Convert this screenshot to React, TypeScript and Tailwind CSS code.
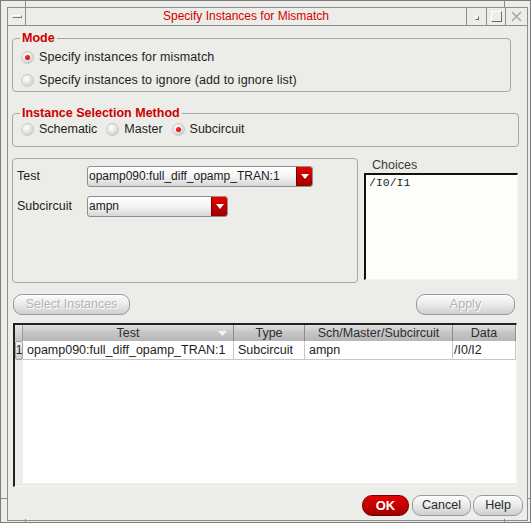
import React from 'react';

// helper bits
const Radio = ({ on }: { on?: boolean }) => (
  <span className="flex h-[11px] w-[11px] shrink-0 items-center justify-center rounded-full bg-[radial-gradient(circle_at_40%_35%,#ffffff,#e6e6e6_45%,#b4b4b4)] shadow-[0_0_0_1px_#c8c8c8]">
    {on && <span className="h-[5px] w-[5px] rounded-full bg-[radial-gradient(circle_at_40%_35%,#ff3030,#c00000)]" />}
  </span>
);

const Dropdown = ({ value, width }: { value: string; width: string }) => (
  <div className={`flex h-[21px] ${width} overflow-hidden rounded-[3px] border border-[#8e8e8e] bg-[linear-gradient(#ffffff,#f4f4f4_50%,#d6d6d6)]`}>
    <span className="flex-1 truncate pl-[1px] text-[12px] leading-[18px] text-[#1a1a1a]">{value}</span>
    <span className="flex w-[16px] items-center justify-center border-l border-[#7a0000] bg-[linear-gradient(#e80000,#c00000_50%,#9a0000)]">
      <svg width="8" height="5" viewBox="0 0 8 5">
        <path d="M0 0 L8 0 L4 5 Z" fill="#ffffff" />
      </svg>
    </span>
  </div>
);

const PillButton = ({ label, width, disabled }: { label: string; width: string; disabled?: boolean }) => (
  <div
    className={`flex h-[21px] ${width} items-center justify-center rounded-[9px] border border-[#9a9a9a] bg-[linear-gradient(#fbfbfb,#ececec_45%,#cfcfcf)] shadow-[inset_0_1px_0_#ffffff] ${
      disabled ? 'text-[#b4b4b4] [text-shadow:1px_1px_0_#ffffff]' : 'text-[#2a2a2a]'
    }`}
  >
    {label}
  </div>
);

const cols = [
  { title: 'Test', w: 'w-[211px]', arrow: true },
  { title: 'Type', w: 'w-[71px]' },
  { title: 'Sch/Master/Subcircuit', w: 'w-[148px]' },
  { title: 'Data', w: 'w-[63px]' },
];

const row = ['opamp090:full_diff_opamp_TRAN:1', 'Subcircuit', 'ampn', '/I0/I2'];

export default function App() {
  return (
    <div className="relative h-[523px] w-[531px] overflow-hidden border border-[#7c7c7c] bg-[#ecece9] font-['Liberation_Sans',Arial,sans-serif] text-[12.5px] text-[#1e1e1e]">
      {/* frame handle ticks */}
      <span className="absolute left-[24px] top-0 h-[7px] w-px bg-[#8e8e8e]" />
      <span className="absolute left-[503px] top-0 h-[7px] w-px bg-[#8e8e8e]" />
      <span className="absolute bottom-0 left-[24px] h-[3px] w-px bg-[#8e8e8e]" />
      <span className="absolute bottom-0 left-[503px] h-[3px] w-px bg-[#8e8e8e]" />
      <span className="absolute left-0 top-[497px] h-px w-[6px] bg-[#8e8e8e]" />
      <span className="absolute right-0 top-[497px] h-px w-[2px] bg-[#8e8e8e]" />

      <div className="mb-[1px] ml-[6px] mr-[2px] mt-[6px] flex h-[514px] flex-col border border-[#8e8e8e]">
        {/* title bar */}
        <div className="flex h-[18px] shrink-0 border-b border-[#8e8e8e]">
          <div className="flex w-[18px] items-center justify-center border-r border-[#8e8e8e]">
            <span className="h-[3px] w-[10px] border border-b-[#7a7a7a] border-l-white border-r-[#7a7a7a] border-t-white" />
          </div>
          <div className="flex-1 text-center text-[12px] leading-[17px] text-[#d40000]">Specify Instances for Mismatch</div>
          <div className="flex w-[20px] items-center justify-center border-l border-[#8e8e8e]">
            <span className="mt-[3px] h-[4px] w-[4px] border border-b-[#6a6a6a] border-l-white border-r-[#6a6a6a] border-t-white" />
          </div>
          <div className="flex w-[19px] items-center justify-center border-l border-[#8e8e8e]">
            <span className="h-[11px] w-[11px] border border-b-[#6a6a6a] border-l-white border-r-[#6a6a6a] border-t-white" />
          </div>
          <div className="flex w-[22px] items-center justify-center border-l border-[#8e8e8e]">
            <svg width="11" height="11" viewBox="0 0 11 11">
              <path d="M1 1 L10 10 M10 1 L1 10" stroke="#a8a8a8" strokeWidth="1.6" />
            </svg>
          </div>
        </div>

        {/* Mode */}
        <fieldset className="ml-[4px] mr-[16px] mt-[5px] h-[61px] rounded-[4px] border border-[#a6a6a6] pb-[2px] pl-[9px]">
          <legend className="ml-[-2px] px-[2px] text-[12.5px] font-bold leading-[15px] text-[#cc0000]">Mode</legend>
          <div className="mt-[1px] flex h-[20px] items-center gap-[6px] tracking-[0.1px]">
            <Radio on />
            <span>Specify instances for mismatch</span>
          </div>
          <div className="mt-[3px] flex h-[20px] items-center gap-[6px] tracking-[0.1px]">
            <Radio />
            <span>Specify instances to ignore (add to ignore list)</span>
          </div>
        </fieldset>

        {/* Instance Selection Method */}
        <fieldset className="ml-[4px] mr-[8px] mt-[14px] h-[41px] rounded-[4px] border border-[#a6a6a6] pl-[9px]">
          <legend className="ml-[-2px] px-[2px] text-[12.5px] font-bold leading-[15px] text-[#cc0000]">Instance Selection Method</legend>
          <div className="flex h-[16px] items-center gap-[10px]">
            <div className="flex items-center gap-[6px]">
              <Radio />
              <span>Schematic</span>
            </div>
            <div className="flex items-center gap-[6px]">
              <Radio />
              <span>Master</span>
            </div>
            <div className="flex items-center gap-[6px]">
              <Radio on />
              <span>Subcircuit</span>
            </div>
          </div>
        </fieldset>

        {/* test / subcircuit + choices */}
        <div className="ml-[4px] mt-[11px] flex h-[125px] gap-[6px]">
          <div className="w-[346px] rounded-[4px] border border-[#a6a6a6] pl-[4px] pt-[7px]">
            <div className="flex h-[21px] items-center">
              <span className="w-[70px]">Test</span>
              <Dropdown value="opamp090:full_diff_opamp_TRAN:1" width="w-[226px]" />
            </div>
            <div className="mt-[9px] flex h-[21px] items-center">
              <span className="w-[70px]">Subcircuit</span>
              <Dropdown value="ampn" width="w-[141px]" />
            </div>
          </div>
          <div className="flex w-[154px] flex-col">
            <span className="h-[15px] pl-[8px] leading-[14px] text-[#3a3a3a]">Choices</span>
            <div className="h-[107px] border-l-2 border-t-2 border-b border-r border-b-[#f4f4f4] border-l-[#111111] border-r-[#f4f4f4] border-t-[#111111] bg-[#fdfdfc] pl-[3px] pt-[1px] font-['Liberation_Mono',monospace] text-[11.5px] leading-[14px]">
              /I0/I1
            </div>
          </div>
        </div>

        {/* buttons */}
        <div className="ml-[5px] mr-[12px] mt-[11px] flex justify-between">
          <PillButton label="Select Instances" width="w-[117px]" disabled />
          <PillButton label="Apply" width="w-[99px]" disabled />
        </div>

        {/* table */}
        <div className="ml-[5px] mt-[8px] flex h-[164px] w-[504px] flex-col border-b border-l-2 border-r border-t-2 border-b-[#f6f6f6] border-l-[#222222] border-r-[#f6f6f6] border-t-[#222222]">
          <div className="flex h-[16px] shrink-0">
            <div className="w-[8px] border-r border-[#9a9a9a] bg-[linear-gradient(#e4e4e4,#c2c2c2)]" />
            {cols.map((c) => (
              <div
                key={c.title}
                className={`relative flex ${c.w} items-center justify-center border-r border-[#8c8c8c] bg-[linear-gradient(#e2e2e2,#c6c6c6_45%,#b6b6b6)] leading-[15px] text-[#2e2e2e]`}
              >
                {c.title}
                {c.arrow && (
                  <svg className="absolute right-[6px] top-[6px]" width="9" height="5" viewBox="0 0 9 5">
                    <path d="M0 0 L9 0 L4.5 5 Z" fill="#f4f4f4" />
                  </svg>
                )}
              </div>
            ))}
          </div>
          <div className="flex h-[19px] shrink-0">
            <div className="flex w-[8px] items-center justify-center rounded-[2px] border border-[#a0a0a0] bg-[linear-gradient(#f4f4f4,#cdcdcd)] text-[12px] leading-[15px]">1</div>
            {cols.map((c, i) => (
              <div
                key={c.title}
                className={`flex ${c.w} items-center border-b border-r border-[#c8c8c8] bg-white ${i === 3 ? 'pl-[1px]' : 'pl-[4px]'} whitespace-nowrap leading-[17px]`}
              >
                {row[i]}
              </div>
            ))}
          </div>
          <div className="flex flex-1">
            <div className="w-[8px] bg-[#ecece9]" />
            <div className="flex-1 border-b-[3px] border-[#ecece9] bg-white" />
          </div>
        </div>

        {/* OK / Cancel / Help */}
        <div className="mr-[4px] mt-[8px] flex justify-end gap-[2px]">
          <div className="mr-[1px] flex h-[21px] w-[47px] items-center justify-center rounded-[10px] border border-[#7a0000] bg-[linear-gradient(#e40000,#c40000_50%,#a00000)] text-[13px] font-bold text-white">
            OK
          </div>
          <PillButton label="Cancel" width="w-[59px]" />
          <PillButton label="Help" width="w-[50px]" />
        </div>
      </div>
    </div>
  );
}
